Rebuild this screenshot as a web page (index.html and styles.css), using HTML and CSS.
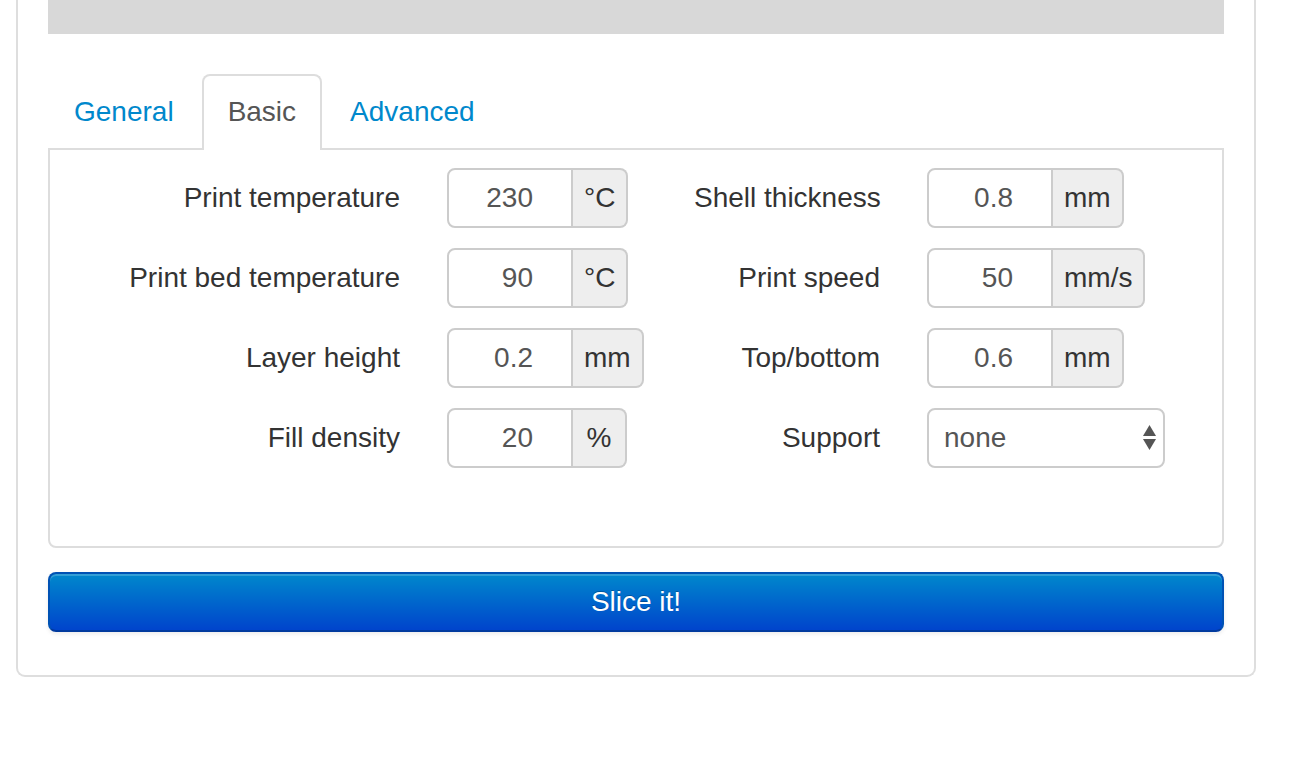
FILE: index.html
```html
<!DOCTYPE html>
<html>
<head>
<meta charset="utf-8">
<link rel="stylesheet" href="styles.css">
</head>
<body>
<div class="outer">
  <div class="viewer"></div>
  <ul class="tabs">
    <li class="tab"><a href="#">General</a></li>
    <li class="tab active"><a href="#">Basic</a></li>
    <li class="tab"><a href="#">Advanced</a></li>
  </ul>
  <div class="pane">
    <div class="form">
      <label class="lbl">Print temperature</label>
      <div class="group"><input class="num" type="text" value="230"><span class="addon">°C</span></div>
      <label class="lbl">Shell thickness</label>
      <div class="group"><input class="num" type="text" value="0.8"><span class="addon">mm</span></div>

      <label class="lbl">Print bed temperature</label>
      <div class="group"><input class="num" type="text" value="90"><span class="addon">°C</span></div>
      <label class="lbl">Print speed</label>
      <div class="group"><input class="num" type="text" value="50"><span class="addon">mm/s</span></div>

      <label class="lbl">Layer height</label>
      <div class="group"><input class="num" type="text" value="0.2"><span class="addon">mm</span></div>
      <label class="lbl">Top/bottom</label>
      <div class="group"><input class="num" type="text" value="0.6"><span class="addon">mm</span></div>

      <label class="lbl">Fill density</label>
      <div class="group"><input class="num" type="text" value="20"><span class="addon">%</span></div>
      <label class="lbl">Support</label>
      <div class="select"><span>none</span>
        <svg class="arrows" width="13" height="26" viewBox="0 0 13 26"><path d="M6.5 0 L13 11 L0 11 Z" fill="#555"/><path d="M0 14 L13 14 L6.5 25 Z" fill="#555"/></svg>
      </div>
    </div>
  </div>
  <button class="slice">Slice it!</button>
</div>
</body>
</html>
```
FILE: styles.css
```css
html, body {
  margin: 0;
  padding: 0;
  background: #fff;
}
body {
  font-family: "Liberation Sans", Arial, Helvetica, sans-serif;
  font-size: 28px;
  color: #333;
}
.outer {
  width: 1176px;
  margin-left: 16px;
  padding: 0 30px 43px;
  border: 2px solid #dedede;
  border-top: none;
  border-radius: 0 0 9px 9px;
}
.viewer {
  height: 34px;
  background: #d8d8d8;
}
.tabs {
  list-style: none;
  margin: 40px 0 -2px;
  padding: 0;
  display: flex;
}
.tab {
  margin-right: 2px;
  position: relative;
  z-index: 1;
}
.tab a {
  display: block;
  padding: 16px 24px 18px;
  line-height: 40px;
  color: #0088cc;
  text-decoration: none;
  border: 2px solid transparent;
  border-bottom: none;
  border-radius: 8px 8px 0 0;
}
.tab.active a {
  color: #555;
  background: #fff;
  border-color: #dddddd;
}
.pane {
  border: 2px solid #dddddd;
  border-radius: 0 0 8px 8px;
  padding: 18px 0 78px;
}
.form {
  display: grid;
  grid-template-columns: 350px 200px 186px 1fr;
  column-gap: 47px;
  row-gap: 20px;
  align-items: center;
}
.lbl {
  text-align: right;
  white-space: nowrap;
  color: #333;
}
.group {
  display: flex;
  height: 60px;
}
.num {
  box-sizing: border-box;
  width: 126px;
  height: 60px;
  margin: 0;
  padding: 0 38px 0 10px;
  border: 2px solid #cccccc;
  border-radius: 8px 0 0 8px;
  font-family: inherit;
  font-size: 28px;
  color: #555;
  text-align: right;
  background: #fff;
  outline: none;
}
.addon {
  height: 60px;
  box-sizing: border-box;
  min-width: 54px;
  display: flex;
  align-items: center;
  justify-content: center;
  padding: 0 11px;
  background: #eeeeee;
  border: 2px solid #cccccc;
  border-left: none;
  border-radius: 0 8px 8px 0;
  color: #333;
}
.select {
  box-sizing: border-box;
  width: 238px;
  height: 60px;
  display: flex;
  align-items: center;
  justify-content: space-between;
  padding: 0 7px 0 15px;
  border: 2px solid #cccccc;
  border-radius: 8px;
  color: #555;
  background: #fff;
}
.arrows {
  display: block;
}
.slice {
  display: block;
  box-sizing: border-box;
  width: 100%;
  height: 60px;
  margin-top: 24px;
  padding: 0;
  font-family: inherit;
  font-size: 28px;
  color: #fff;
  text-shadow: 0 -1px 0 rgba(0,0,0,0.25);
  background: linear-gradient(to bottom, #0088cc, #0044cc);
  border: 2px solid #0052b4;
  border-bottom-color: #003a9e;
  border-radius: 8px;
  box-shadow: inset 0 2px 0 rgba(255,255,255,0.2), 0 2px 4px rgba(0,0,0,0.08);
}
```
